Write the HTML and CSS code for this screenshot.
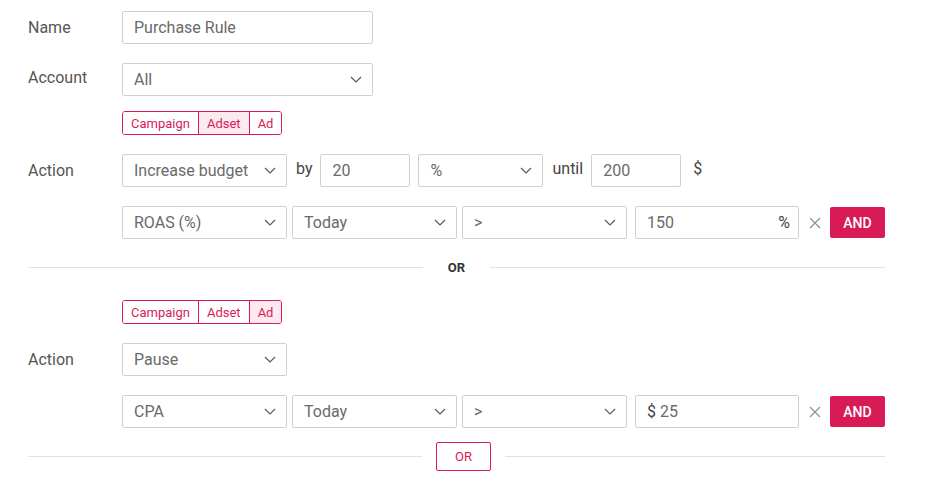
FILE: index.html
```html
<!DOCTYPE html>
<html lang="en">

<head>
    <title>Purchase Rule</title>
    <meta charset="utf-8">
    <link rel="stylesheet" href="styles.css">
</head>

<body>
    <div class="rule-form">
        <div class="row row-name">
            <label class="label">Name</label>
            <input class="field wide" type="text" value="Purchase Rule">
        </div>

        <div class="row row-account">
            <label class="label">Account</label>
            <div class="field select wide"><span>All</span>
                <svg class="chev" width="12" height="7" viewBox="0 0 12 7"><path d="M1 1l5 5 5-5" fill="none" stroke="#555" stroke-width="1.1"/></svg>
            </div>
        </div>

        <div class="row row-seg">
            <span class="label"></span>
            <div class="seg">
                <button>Campaign</button><button class="on">Adset</button><button>Ad</button>
            </div>
        </div>

        <div class="row row-action">
            <label class="label">Action</label>
            <div class="field select w165"><span>Increase budget</span>
                <svg class="chev" width="12" height="7" viewBox="0 0 12 7"><path d="M1 1l5 5 5-5" fill="none" stroke="#555" stroke-width="1.1"/></svg>
            </div>
            <span class="word">by</span>
            <input class="field w90 amount" type="text" value="20">
            <div class="field select w125"><span>%</span>
                <svg class="chev" width="12" height="7" viewBox="0 0 12 7"><path d="M1 1l5 5 5-5" fill="none" stroke="#555" stroke-width="1.1"/></svg>
            </div>
            <span class="word">until</span>
            <input class="field w90" type="text" value="200">
            <span class="word unit">$</span>
        </div>

        <div class="row row-cond">
            <span class="label"></span>
            <div class="field select w165"><span>ROAS (%)</span>
                <svg class="chev" width="12" height="7" viewBox="0 0 12 7"><path d="M1 1l5 5 5-5" fill="none" stroke="#555" stroke-width="1.1"/></svg>
            </div>
            <div class="field select w165"><span>Today</span>
                <svg class="chev" width="12" height="7" viewBox="0 0 12 7"><path d="M1 1l5 5 5-5" fill="none" stroke="#555" stroke-width="1.1"/></svg>
            </div>
            <div class="field select w165"><span>&gt;</span>
                <svg class="chev" width="12" height="7" viewBox="0 0 12 7"><path d="M1 1l5 5 5-5" fill="none" stroke="#555" stroke-width="1.1"/></svg>
            </div>
            <div class="field value"><span>150</span><span class="suffix">%</span></div>
            <svg class="remove" width="12" height="12" viewBox="0 0 12 12"><path d="M1 1l10 10M11 1L1 11" stroke="#8a8f96" stroke-width="1.2"/></svg>
            <button class="and">AND</button>
        </div>

        <div class="divider"><span class="line"></span><span class="or-text">OR</span><span class="line"></span></div>

        <div class="row row-seg2">
            <span class="label"></span>
            <div class="seg">
                <button>Campaign</button><button>Adset</button><button class="on">Ad</button>
            </div>
        </div>

        <div class="row row-action">
            <label class="label">Action</label>
            <div class="field select w165"><span>Pause</span>
                <svg class="chev" width="12" height="7" viewBox="0 0 12 7"><path d="M1 1l5 5 5-5" fill="none" stroke="#555" stroke-width="1.1"/></svg>
            </div>
        </div>

        <div class="row row-cond">
            <span class="label"></span>
            <div class="field select w165"><span>CPA</span>
                <svg class="chev" width="12" height="7" viewBox="0 0 12 7"><path d="M1 1l5 5 5-5" fill="none" stroke="#555" stroke-width="1.1"/></svg>
            </div>
            <div class="field select w165"><span>Today</span>
                <svg class="chev" width="12" height="7" viewBox="0 0 12 7"><path d="M1 1l5 5 5-5" fill="none" stroke="#555" stroke-width="1.1"/></svg>
            </div>
            <div class="field select w165"><span>&gt;</span>
                <svg class="chev" width="12" height="7" viewBox="0 0 12 7"><path d="M1 1l5 5 5-5" fill="none" stroke="#555" stroke-width="1.1"/></svg>
            </div>
            <div class="field value"><span><span class="dollar">$</span> 25</span></div>
            <svg class="remove" width="12" height="12" viewBox="0 0 12 12"><path d="M1 1l10 10M11 1L1 11" stroke="#8a8f96" stroke-width="1.2"/></svg>
            <button class="and">AND</button>
        </div>

        <div class="divider bottom"><span class="line left"></span><button class="or-btn">OR</button><span class="line"></span></div>
    </div>
</body>

</html>
```

FILE: styles.css
```css
body {
    margin: 0;
    padding: 0;
    background: #fff;
    font-family: Roboto, "Liberation Sans", sans-serif;
    color: #555;
}

.rule-form {
    width: 857px;
    padding: 11px 0 0 28px;
}

.row {
    display: flex;
    align-items: center;
}

.label {
    width: 94px;
    flex: none;
    font-size: 16px;
    color: #555;
}

.row-name { margin-bottom: 19px; }
.row-name .label { margin-top: -1px; }
.row-account { margin-bottom: 15px; }
.row-account .label { margin-top: -5px; }
.row-seg { margin-bottom: 19px; }
.row-action { margin-bottom: 19px; }
.row-seg2 { margin-top: 23px; margin-bottom: 19px; }

.field {
    box-sizing: border-box;
    height: 33px;
    border: 1px solid #d0d0d0;
    border-radius: 2px;
    background: #fff;
    font-family: Roboto, "Liberation Sans", sans-serif;
    font-size: 16px;
    color: #6a6a6a;
    padding: 0 11px;
    outline: none;
}

.wide { width: 251px; }
.w165 { width: 165px; }
.w125 { width: 125px; }
.w90 { width: 90px; }
.amount { margin-right: 8px; }

.select {
    display: flex;
    align-items: center;
    justify-content: space-between;
    padding-right: 10px;
}

.chev { flex: none; }

.word {
    font-size: 16px;
    color: #444;
    margin: -4px 8px 0 9px;
}
.word.unit { margin-left: 12px; }

.row-cond .select { margin-right: 5px; }
.row-cond .select:nth-of-type(3) { margin-right: 8px; }

.value {
    width: 164px;
    display: flex;
    align-items: center;
    justify-content: space-between;
    padding-right: 8px;
}
.suffix { color: #444; }
.dollar { color: #444; }

.remove {
    margin: 0 9px 0 10px;
}

.and {
    width: 55px;
    height: 31px;
    border: 0;
    border-radius: 2px;
    background: #d81b57;
    color: #fff;
    font-family: Roboto, "Liberation Sans", sans-serif;
    font-weight: 500;
    font-size: 14px;
    padding: 0;
}

.seg {
    display: flex;
    border: 1px solid #d81b57;
    border-radius: 3px;
    overflow: hidden;
    height: 24px;
    box-sizing: border-box;
}
.seg button {
    border: 0;
    border-left: 1px solid #d81b57;
    background: #fff;
    color: #d81b57;
    font-family: Roboto, "Liberation Sans", sans-serif;
    font-size: 13px;
    padding: 0 8px;
    height: 22px;
}
.seg button:first-child { border-left: 0; }
.seg button.on { background: #fde9f0; }

.divider {
    display: flex;
    align-items: center;
    height: 20px;
    margin-top: 18px;
}
.line {
    flex: 1;
    height: 1px;
    background: #e2e2e2;
}
.line.left {
    flex: none;
    width: 394px;
}
.or-text {
    padding: 0 25px;
    font-size: 13px;
    font-weight: 700;
    color: #333;
}

.divider.bottom {
    height: 29px;
    margin-top: 14px;
}
.or-btn {
    width: 55px;
    height: 29px;
    margin: 0 14px;
    border: 1px solid #d81b57;
    border-radius: 2px;
    background: #fff;
    color: #d81b57;
    font-family: Roboto, "Liberation Sans", sans-serif;
    font-size: 13px;
    padding: 0;
}
```
